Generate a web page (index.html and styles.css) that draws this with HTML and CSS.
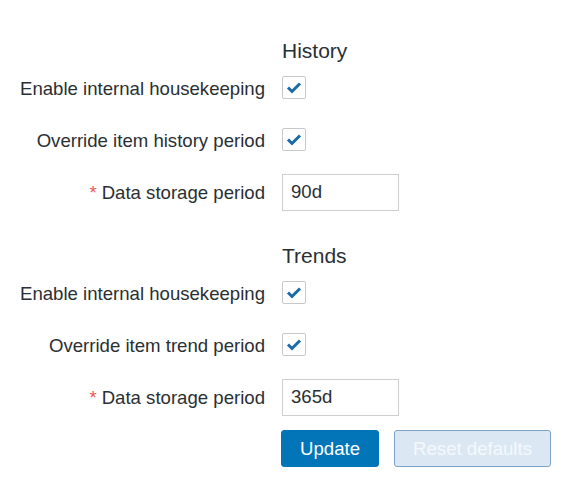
FILE: index.html
```html
<!DOCTYPE html>
<html>
<head>
<meta charset="utf-8">
<link rel="stylesheet" href="styles.css">
</head>
<body>
<form class="form">
  <div class="heading">History</div>
  <div class="row">
    <label class="label">Enable internal housekeeping</label>
    <span class="checkbox"><svg viewBox="0 0 24 23" width="24" height="23"><path d="M6 11.5 L10 15.5 L18 7.5" fill="none" stroke="#1a6aa8" stroke-width="3"/></svg></span>
  </div>
  <div class="row">
    <label class="label">Override item history period</label>
    <span class="checkbox"><svg viewBox="0 0 24 23" width="24" height="23"><path d="M6 11.5 L10 15.5 L18 7.5" fill="none" stroke="#1a6aa8" stroke-width="3"/></svg></span>
  </div>
  <div class="row">
    <label class="label"><span class="req">*</span>Data storage period</label>
    <input class="input" type="text" value="90d">
  </div>

  <div class="heading heading-2">Trends</div>
  <div class="row">
    <label class="label">Enable internal housekeeping</label>
    <span class="checkbox"><svg viewBox="0 0 24 23" width="24" height="23"><path d="M6 11.5 L10 15.5 L18 7.5" fill="none" stroke="#1a6aa8" stroke-width="3"/></svg></span>
  </div>
  <div class="row">
    <label class="label">Override item trend period</label>
    <span class="checkbox"><svg viewBox="0 0 24 23" width="24" height="23"><path d="M6 11.5 L10 15.5 L18 7.5" fill="none" stroke="#1a6aa8" stroke-width="3"/></svg></span>
  </div>
  <div class="row">
    <label class="label"><span class="req">*</span>Data storage period</label>
    <input class="input" type="text" value="365d">
  </div>

  <div class="buttons">
    <button type="button" class="btn btn-update">Update</button>
    <button type="button" class="btn btn-reset" disabled>Reset defaults</button>
  </div>
</form>
</body>
</html>
```

FILE: styles.css
```css
html, body {
  margin: 0;
  padding: 0;
  background: #ffffff;
}

body {
  font-family: "Liberation Sans", Arial, sans-serif;
  font-size: 18.6px;
  color: #2a2f33;
}

.form {
  padding-top: 39px;
  display: flex;
  flex-direction: column;
}

.heading {
  margin-left: 282px;
  font-size: 21px;
  line-height: 24px;
  height: 24px;
  margin-bottom: 7px;
  color: #2a2f33;
}

.heading-2 {
  margin-top: 18px;
}

.row {
  display: flex;
  align-items: center;
  height: 36px;
  margin-bottom: 16px;
}

.label {
  width: 265px;
  margin-right: 17px;
  text-align: right;
  padding-top: 2px;
  box-sizing: border-box;
  white-space: nowrap;
}

.req {
  color: #e45959;
  margin-right: 5px;
}

.checkbox {
  width: 24px;
  height: 23px;
  box-sizing: border-box;
  border: 1px solid #c5c9cc;
  border-radius: 2px;
  background: #ffffff;
  display: flex;
  align-items: center;
  justify-content: center;
  margin-top: -1px;
}

.checkbox svg {
  display: block;
  flex: none;
}

.input {
  width: 117px;
  height: 37px;
  box-sizing: border-box;
  border: 1px solid #cfcfcf;
  padding: 0 8px;
  margin: 0;
  font-family: "Liberation Sans", Arial, sans-serif;
  font-size: 18.6px;
  color: #2a2f33;
  background: #ffffff;
  outline: none;
}

.buttons {
  display: flex;
  gap: 15px;
  margin-left: 281px;
  margin-top: -1px;
}

.btn {
  height: 37px;
  box-sizing: border-box;
  border-radius: 3px;
  font-family: "Liberation Sans", Arial, sans-serif;
  font-size: 18.6px;
  padding: 0;
  margin: 0;
}

.btn-update {
  width: 98px;
  background: #0275b8;
  border: 1px solid #0275b8;
  color: #ffffff;
}

.btn-reset {
  width: 157px;
  background: #dbe8f3;
  border: 1px solid #7fa3c4;
  color: #f4f8fb;
}
```
